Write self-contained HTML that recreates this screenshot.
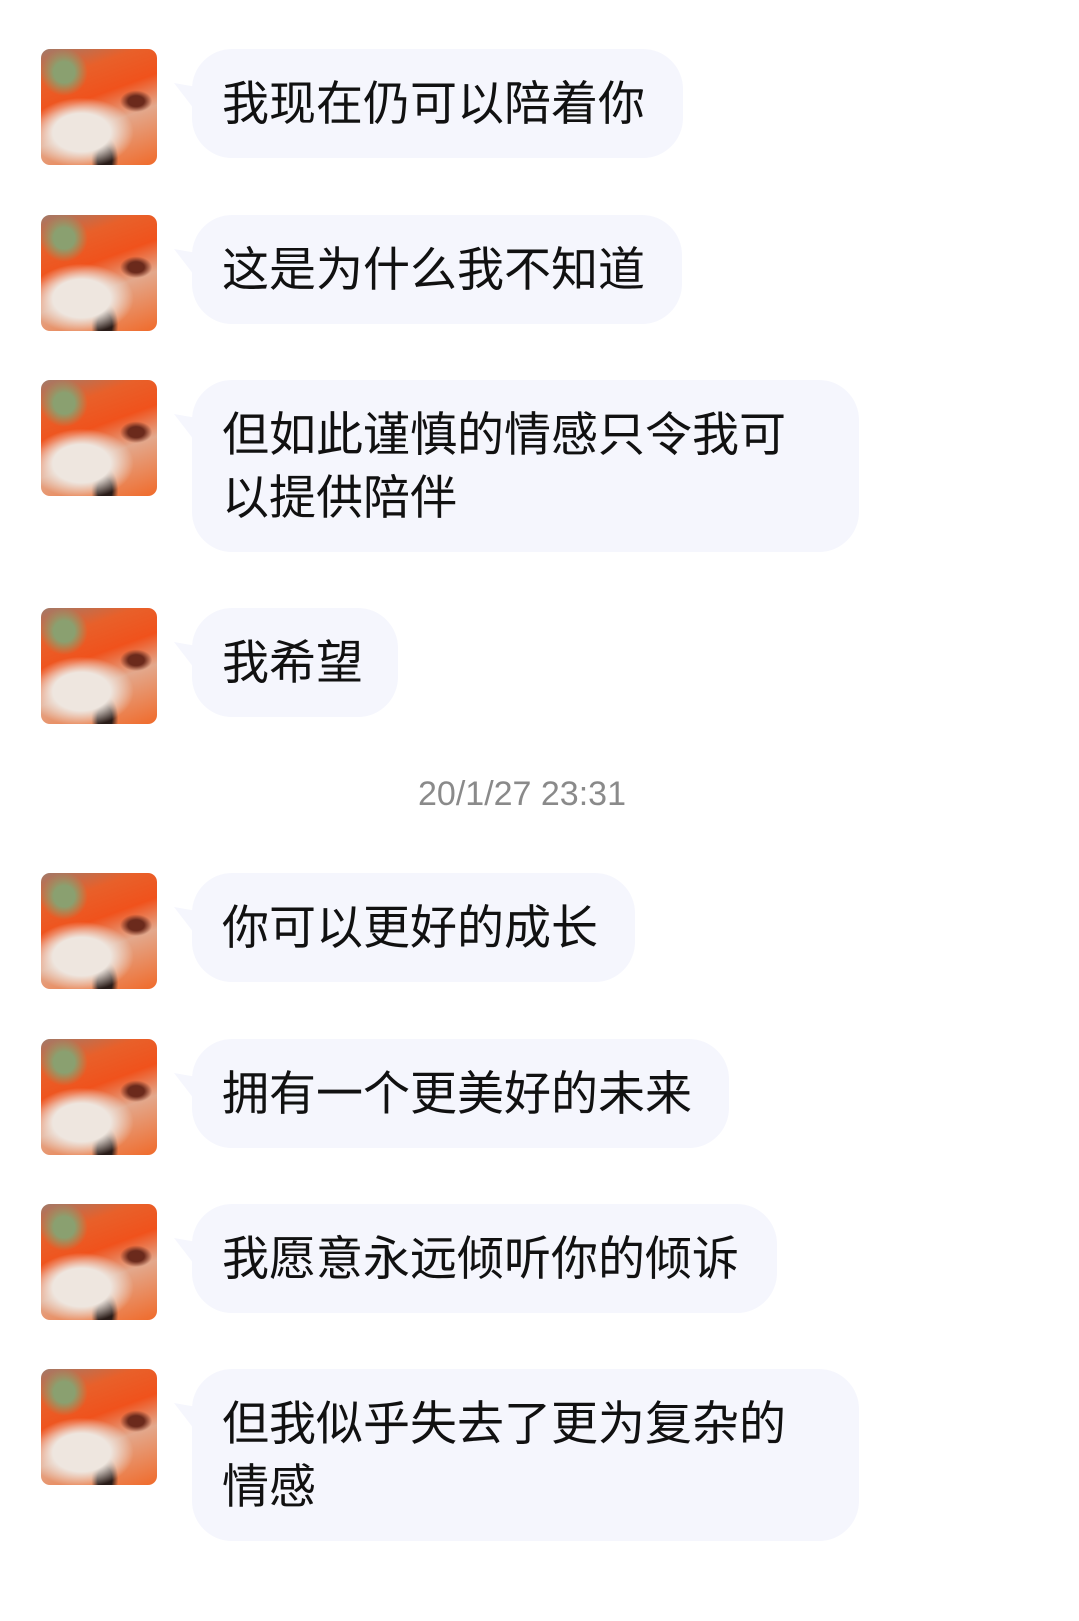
<!DOCTYPE html>
<html><head><meta charset="utf-8"><style>
body{margin:0;width:1079px;height:1621px;background:#fff;position:relative;overflow:hidden;font-family:"Liberation Sans","Noto Sans CJK SC",sans-serif}
.av{position:absolute;left:41px;width:116px;height:116px;border-radius:9px;overflow:hidden;
background:radial-gradient(ellipse 45% 30% at 35% 72%,#eee6df 0 55%,rgba(240,230,220,0) 100%),radial-gradient(ellipse at 82% 45%,#6b2a1c 0 6%,rgba(0,0,0,0) 12%),radial-gradient(ellipse at 55% 95%,#2a1c18 0 8%,rgba(0,0,0,0) 15%),radial-gradient(ellipse at 20% 20%,#8aa070 0 8%,rgba(0,0,0,0) 18%),linear-gradient(160deg,#a07a6a 0%,#e8602a 22%,#f0521c 42%,#e3a88c 62%,#f06a2a 100%)}
.b{position:absolute;left:192px;background:#f5f6fd;border-radius:40px;padding:23px 30px;font-size:47px;line-height:63px;color:#111}
.b:before{content:"";position:absolute;left:-18px;top:34px;width:30px;height:26px;background:#f5f6fd;clip-path:polygon(0 0,100% 20%,100% 100%,60% 90%)}
.ts{position:absolute;top:775px;left:0;width:1044px;text-align:center;font-size:34px;color:#8a8a8a}
</style></head><body>
<div class="av" style="top:49px"></div><div class="b" style="top:49px;width:431px">我现在仍可以陪着你</div>
<div class="av" style="top:215px"></div><div class="b" style="top:215px;width:430px">这是为什么我不知道</div>
<div class="av" style="top:380px"></div><div class="b" style="top:380px;width:607px">但如此谨慎的情感只令我可<br>以提供陪伴</div>
<div class="av" style="top:608px"></div><div class="b" style="top:608px;width:146px">我希望</div>
<div class="ts">20/1/27 23:31</div>
<div class="av" style="top:873px"></div><div class="b" style="top:873px;width:383px">你可以更好的成长</div>
<div class="av" style="top:1039px"></div><div class="b" style="top:1039px;width:477px">拥有一个更美好的未来</div>
<div class="av" style="top:1204px"></div><div class="b" style="top:1204px;width:525px">我愿意永远倾听你的倾诉</div>
<div class="av" style="top:1369px"></div><div class="b" style="top:1369px;width:607px">但我似乎失去了更为复杂的<br>情感</div>
</body></html>
